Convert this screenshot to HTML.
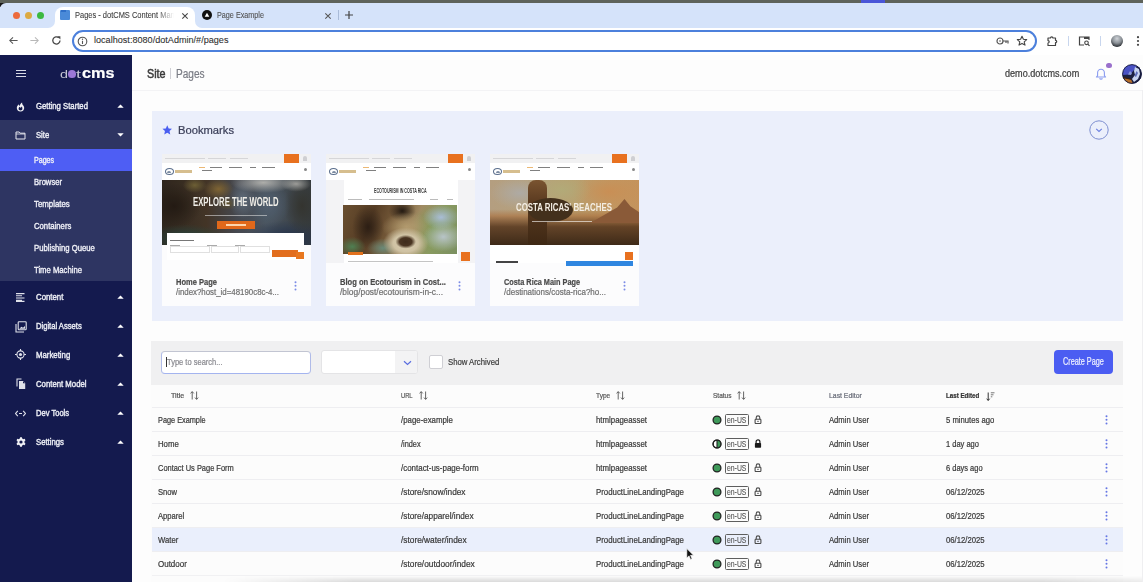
<!DOCTYPE html>
<html><head><meta charset="utf-8">
<style>
*{margin:0;padding:0;box-sizing:border-box}
html,body{width:1143px;height:582px;overflow:hidden;background:#fdfdfd;font-family:"Liberation Sans",sans-serif;position:relative}
.a{position:absolute}
.t{position:absolute;white-space:nowrap;line-height:1;-webkit-text-stroke:0.22px currentColor}
</style></head><body>
<div class="a" style="left:0px;top:0px;width:1143px;height:3px;background:#d5e3fa;"></div>
<div class="a" style="left:0px;top:3px;width:1143px;height:25px;background:#d5e3fa;"></div>
<div class="a" style="left:0px;top:0px;width:6px;height:7px;background:#1a1a1a;"></div>
<div class="a" style="left:0px;top:2.6px;width:8px;height:8px;background:#d5e3fa;border-radius:6px 0 0 0"></div>
<div class="a" style="left:0px;top:0px;width:1143px;height:2.7px;background:#5e635b;"></div>
<div class="a" style="left:860.7px;top:0px;width:24.5px;height:2.5px;background:#4a56d8;"></div>
<div class="a" style="left:0px;top:28px;width:1143px;height:27px;background:#fff;"></div>
<div class="a" style="left:55px;top:7px;width:140px;height:22px;background:#fff;border-radius:8px 8px 0 0"></div>
<div class="a" style="left:72px;top:30px;width:965px;height:22px;background:#fff;border:2px solid #4c80dc;border-radius:11px"></div>
<div class="a" style="left:12.5px;top:11.5px;width:7.5px;height:7.5px;background:#ec6a3c;border-radius:50%"></div>
<div class="a" style="left:24.5px;top:11.5px;width:7.5px;height:7.5px;background:#dcaa42;border-radius:50%"></div>
<div class="a" style="left:36.5px;top:11.5px;width:7.5px;height:7.5px;background:#3cb940;border-radius:50%"></div>
<div class="a" style="left:48px;top:21px;width:7px;height:7px;background:#fff;"></div>
<div class="a" style="left:48px;top:21px;width:7px;height:7px;background:#d5e3fa;border-radius:0 0 7px 0"></div>
<div class="a" style="left:195px;top:21px;width:7px;height:7px;background:#fff;"></div>
<div class="a" style="left:195px;top:21px;width:7px;height:7px;background:#d5e3fa;border-radius:0 0 0 7px"></div>
<div class="a" style="left:60px;top:10px;width:10px;height:10px;background:#4a8ad8;border-radius:1px"></div>
<div class="a" style="left:61px;top:10px;width:5px;height:2px;background:#2f6fc8;"></div>
<div class="a" style="left:74.5px;top:0;width:100px;height:28px;overflow:hidden;-webkit-mask-image:linear-gradient(90deg,#000 82%,transparent 99%)"><div class="t" style="left:0.0px;top:10.94px;font-size:9.3px;color:#404040;transform:scaleX(0.804);transform-origin:0 0;-webkit-text-stroke:0.1px currentColor;">Pages - dotCMS Content Manag</div>
</div>
<svg class="a" style="left:180.5px;top:11.5px" width="8" height="8" viewBox="0 0 8 8"><path d="M1.3 1.3L6.7 6.7M6.7 1.3L1.3 6.7" stroke="#444" stroke-width="1.05"/></svg>
<div class="a" style="left:202px;top:10px;width:10px;height:10px;background:#111;border-radius:50%"></div>
<svg class="a" style="left:202px;top:10px" width="10" height="10" viewBox="0 0 10 10"><path d="M5 2.8L7.3 6.8H2.7Z" fill="#fff"/></svg>
<div class="t" style="left:217.1px;top:10.94px;font-size:9.3px;color:#505050;transform:scaleX(0.777);transform-origin:0 0;-webkit-text-stroke:0.1px currentColor;">Page Example</div>
<svg class="a" style="left:323.5px;top:11.5px" width="8" height="8" viewBox="0 0 8 8"><path d="M1.3 1.3L6.7 6.7M6.7 1.3L1.3 6.7" stroke="#555" stroke-width="1.05"/></svg>
<div class="a" style="left:338px;top:10px;width:1px;height:10px;background:#a9bbd8;"></div>
<svg class="a" style="left:344px;top:10px" width="10" height="10" viewBox="0 0 10 10"><path d="M5 1V9M1 5H9" stroke="#444" stroke-width="1.2"/></svg>
<svg class="a" style="left:8px;top:35px" width="11" height="11" viewBox="0 0 11 11"><path d="M9.6 5.5H1.8M5 2.3L1.8 5.5L5 8.7" stroke="#555" stroke-width="1.05" fill="none"/></svg>
<svg class="a" style="left:29px;top:35px" width="11" height="11" viewBox="0 0 11 11"><path d="M1.4 5.5H9.2M6 2.3L9.2 5.5L6 8.7" stroke="#b8b8b8" stroke-width="1.05" fill="none"/></svg>
<svg class="a" style="left:51px;top:35px" width="11" height="11" viewBox="0 0 11 11"><path d="M9 5.5A3.6 3.6 0 1 1 7.8 2.8" stroke="#474747" stroke-width="1.3" fill="none"/><path d="M6.2 1.2H9.4V4.4Z" fill="#474747"/></svg>
<svg class="a" style="left:77px;top:35.5px" width="11" height="11" viewBox="0 0 11 11"><circle cx="5.5" cy="5.5" r="4.3" stroke="#555" stroke-width="1.1" fill="none"/><path d="M5.5 4.8V8" stroke="#555" stroke-width="1.1"/><circle cx="5.5" cy="3.2" r=".7" fill="#555"/></svg>
<div class="t" style="left:94px;top:36px;font-size:9.1px;color:#303030;-webkit-text-stroke:0.08px currentColor">localhost:8080/dotAdmin/#/pages</div>
<svg class="a" style="left:996px;top:36px" width="13" height="10" viewBox="0 0 13 10"><circle cx="4" cy="5" r="3" stroke="#555" stroke-width="1.2" fill="none"/><circle cx="4" cy="5" r=".8" fill="#555"/><path d="M7 5H12V7.5M10 5V7" stroke="#555" stroke-width="1.2" fill="none"/></svg>
<svg class="a" style="left:1016px;top:35px" width="12" height="12" viewBox="0 0 12 12"><path d="M6 1.2L7.4 4.3L10.7 4.6L8.2 6.8L9 10.1L6 8.4L3 10.1L3.8 6.8L1.3 4.6L4.6 4.3Z" stroke="#444" stroke-width="1.1" fill="none" stroke-linejoin="round"/></svg>
<svg class="a" style="left:1046px;top:35px" width="12" height="12" viewBox="0 0 12 12"><path d="M2 3H4.5A1.2 1.2 0 0 1 6.9 3H9.5V5.3A1.2 1.2 0 0 1 9.5 7.7V10.5H2V8A1.2 1.2 0 0 0 2 5.6Z" stroke="#444" stroke-width="1.2" fill="none" stroke-linejoin="round"/></svg>
<div class="a" style="left:1068px;top:36px;width:1px;height:10px;background:#c8d6ee;"></div>
<svg class="a" style="left:1078px;top:35px" width="13" height="12" viewBox="0 0 13 12"><path d="M6 10H1.5V2H11V5" stroke="#444" stroke-width="1.2" fill="none"/><path d="M6 2H11V4H6Z" fill="#444"/><circle cx="8.5" cy="7.8" r="1.8" stroke="#444" stroke-width="1.1" fill="none"/><path d="M9.8 9.1L11.5 10.8" stroke="#444" stroke-width="1.2"/></svg>
<div class="a" style="left:1100px;top:36px;width:1px;height:10px;background:#c8d6ee;"></div>
<div class="a" style="left:1110.5px;top:34.5px;width:12px;height:12px;background:radial-gradient(circle at 50% 30%,#cfd3d8 0,#8a9096 45%,#2a2e33 80%);border-radius:50%"></div>
<svg class="a" style="left:1135px;top:35px" width="6" height="12" viewBox="0 0 6 12"><circle cx="3" cy="2.2" r="1.1" fill="#444"/><circle cx="3" cy="6" r="1.1" fill="#444"/><circle cx="3" cy="9.8" r="1.1" fill="#444"/></svg>
<div class="a" style="left:0px;top:55px;width:132px;height:527px;background:#141a4e;"></div>
<div class="a" style="left:0px;top:120px;width:132px;height:161px;background:#2e3562;"></div>
<div class="a" style="left:0px;top:149px;width:132px;height:22px;background:#4e5ef4;"></div>
<div class="a" style="left:16px;top:69.5px;width:10px;height:1.3px;background:#d8dae6;"></div>
<div class="a" style="left:16px;top:72.7px;width:10px;height:1.3px;background:#d8dae6;"></div>
<div class="a" style="left:16px;top:75.8px;width:10px;height:1.3px;background:#d8dae6;"></div>
<div class="t" style="left:59.6px;top:69.03px;font-size:11.2px;color:#c4c5d2;transform:scaleX(1.284);transform-origin:0 0;-webkit-text-stroke:0;">d</div>
<div class="a" style="left:68.2px;top:70.3px;width:7.7px;height:7.7px;background:#9b78d6;border-radius:50%"></div>
<div class="t" style="left:76.0px;top:69.03px;font-size:11.2px;color:#c4c5d2;transform:scaleX(1.607);transform-origin:0 0;-webkit-text-stroke:0;">t</div>
<div class="t" style="left:81.6px;top:65.80px;font-size:14.6px;color:#ffffff;font-weight:bold;transform:scaleX(1.109);transform-origin:0 0;">cms</div>
<svg class="a" style="left:16px;top:101.5px" width="9" height="10" viewBox="0 0 9 10"><path d="M4.5 9.6C2.2 9.6 0.8 8 0.8 6.1C0.8 4.3 2.1 3.1 2.6 2.3C2.7 3.1 3.1 3.7 3.6 4C3.9 2.4 5 1 6.1 0.4C6 1.6 6.6 2.6 7.3 3.6C7.9 4.4 8.2 5.2 8.2 6.1C8.2 8 6.8 9.6 4.5 9.6Z" fill="#f2f2f6"/><path d="M4.5 8.4C3.4 8.4 2.6 7.7 2.6 6.7C2.6 5.8 3.3 5.2 3.8 4.8C4 5.4 4.4 5.7 4.9 5.8C5.1 5.2 5.5 4.8 5.9 4.6C6.2 5.2 6.4 5.9 6.4 6.7C6.4 7.7 5.6 8.4 4.5 8.4Z" fill="#141a4e"/></svg>
<svg class="a" style="left:15px;top:130.6px" width="11" height="9" viewBox="0 0 11 9"><path d="M1 1H4.2L5.2 2.2H10V8H1Z" stroke="#e8e9f0" stroke-width="1" fill="none" stroke-linejoin="round"/><path d="M1 3H10" stroke="#e8e9f0" stroke-width="0.8"/></svg>
<div class="t" style="left:35.5px;top:102.26px;font-size:8.7px;color:#eceef5;transform:scaleX(0.889);transform-origin:0 0;-webkit-text-stroke:0.4px currentColor;">Getting Started</div>
<div class="t" style="left:35.5px;top:131.26px;font-size:8.7px;color:#eceef5;transform:scaleX(0.881);transform-origin:0 0;-webkit-text-stroke:0.4px currentColor;">Site</div>
<svg class="a" style="left:116.5px;top:104px" width="7" height="4" viewBox="0 0 7 4"><path d="M0.3 3.8L3.5 0.4L6.7 3.8Z" fill="#fff"/></svg>
<svg class="a" style="left:116.5px;top:133.2px" width="7" height="4" viewBox="0 0 7 4"><path d="M0.3 0.2L3.5 3.6L6.7 0.2Z" fill="#fff"/></svg>
<div class="t" style="left:33.8px;top:156.16px;font-size:8.7px;color:#f0f1f8;transform:scaleX(0.815);transform-origin:0 0;-webkit-text-stroke:0.35px currentColor;">Pages</div>
<div class="t" style="left:33.8px;top:178.16px;font-size:8.7px;color:#f0f1f8;transform:scaleX(0.878);transform-origin:0 0;-webkit-text-stroke:0.35px currentColor;">Browser</div>
<div class="t" style="left:33.8px;top:200.16px;font-size:8.7px;color:#f0f1f8;transform:scaleX(0.903);transform-origin:0 0;-webkit-text-stroke:0.35px currentColor;">Templates</div>
<div class="t" style="left:33.8px;top:222.16px;font-size:8.7px;color:#f0f1f8;transform:scaleX(0.889);transform-origin:0 0;-webkit-text-stroke:0.35px currentColor;">Containers</div>
<div class="t" style="left:33.8px;top:244.16px;font-size:8.7px;color:#f0f1f8;transform:scaleX(0.888);transform-origin:0 0;-webkit-text-stroke:0.35px currentColor;">Publishing Queue</div>
<div class="t" style="left:33.8px;top:266.16px;font-size:8.7px;color:#f0f1f8;transform:scaleX(0.884);transform-origin:0 0;-webkit-text-stroke:0.35px currentColor;">Time Machine</div>
<div class="t" style="left:35.6px;top:293.36px;font-size:8.7px;color:#eceef5;transform:scaleX(0.899);transform-origin:0 0;-webkit-text-stroke:0.4px currentColor;">Content</div>
<svg class="a" style="left:116.5px;top:295.2px" width="7" height="4" viewBox="0 0 7 4"><path d="M0.3 3.8L3.5 0.4L6.7 3.8Z" fill="#fff"/></svg>
<div class="t" style="left:35.6px;top:322.26px;font-size:8.7px;color:#eceef5;transform:scaleX(0.877);transform-origin:0 0;-webkit-text-stroke:0.4px currentColor;">Digital Assets</div>
<svg class="a" style="left:116.5px;top:324.09999999999997px" width="7" height="4" viewBox="0 0 7 4"><path d="M0.3 3.8L3.5 0.4L6.7 3.8Z" fill="#fff"/></svg>
<div class="t" style="left:35.6px;top:351.16px;font-size:8.7px;color:#eceef5;transform:scaleX(0.898);transform-origin:0 0;-webkit-text-stroke:0.4px currentColor;">Marketing</div>
<svg class="a" style="left:116.5px;top:353.0px" width="7" height="4" viewBox="0 0 7 4"><path d="M0.3 3.8L3.5 0.4L6.7 3.8Z" fill="#fff"/></svg>
<div class="t" style="left:35.6px;top:380.06px;font-size:8.7px;color:#eceef5;transform:scaleX(0.894);transform-origin:0 0;-webkit-text-stroke:0.4px currentColor;">Content Model</div>
<svg class="a" style="left:116.5px;top:381.9px" width="7" height="4" viewBox="0 0 7 4"><path d="M0.3 3.8L3.5 0.4L6.7 3.8Z" fill="#fff"/></svg>
<div class="t" style="left:35.6px;top:408.96px;font-size:8.7px;color:#eceef5;transform:scaleX(0.870);transform-origin:0 0;-webkit-text-stroke:0.4px currentColor;">Dev Tools</div>
<svg class="a" style="left:116.5px;top:410.8px" width="7" height="4" viewBox="0 0 7 4"><path d="M0.3 3.8L3.5 0.4L6.7 3.8Z" fill="#fff"/></svg>
<div class="t" style="left:35.6px;top:437.86px;font-size:8.7px;color:#eceef5;transform:scaleX(0.888);transform-origin:0 0;-webkit-text-stroke:0.4px currentColor;">Settings</div>
<svg class="a" style="left:116.5px;top:439.7px" width="7" height="4" viewBox="0 0 7 4"><path d="M0.3 3.8L3.5 0.4L6.7 3.8Z" fill="#fff"/></svg>
<svg class="a" style="left:16px;top:293px" width="9" height="9" viewBox="0 0 9 9"><path d="M0 0.6H8.5M0 2.8H6M0 5H8.5M0 7.2H6M0 8.4H8.5" stroke="#dfe1ea" stroke-width="1.1"/></svg>
<svg class="a" style="left:14.5px;top:320.5px" width="12" height="12" viewBox="0 0 12 12"><rect x="3.2" y="0.8" width="8" height="8" stroke="#dfe1ea" stroke-width="1.1" fill="none" rx="0.8"/><path d="M1 3V11H9" stroke="#dfe1ea" stroke-width="1.1" fill="none"/><path d="M4.5 7.5L6.5 5.8L8 6.8L10 5V7.8H4.5Z" fill="#dfe1ea"/></svg>
<svg class="a" style="left:15px;top:349.3px" width="11" height="11" viewBox="0 0 11 11"><circle cx="5.5" cy="5.5" r="3.6" stroke="#dfe1ea" stroke-width="1.1" fill="none"/><circle cx="5.5" cy="5.5" r="1.6" fill="#dfe1ea"/><path d="M5.5 0V1.9M5.5 9.1V11M0 5.5H1.9M9.1 5.5H11" stroke="#dfe1ea" stroke-width="1.1"/></svg>
<svg class="a" style="left:15.5px;top:378px" width="10" height="12" viewBox="0 0 10 12"><path d="M1 8.5V1H5.5" stroke="#dfe1ea" stroke-width="1.1" fill="none"/><path d="M3 3H7.2L9.2 5V11H3Z" fill="#dfe1ea"/><path d="M7 3V5.2H9.2" fill="#141a4e"/></svg>
<svg class="a" style="left:15px;top:409.5px" width="11" height="7" viewBox="0 0 11 7"><path d="M2.8 0.8L0.6 3.5L2.8 6.2M8.2 0.8L10.4 3.5L8.2 6.2M4 3.5H7" stroke="#dfe1ea" stroke-width="1.1" fill="none"/></svg>
<svg class="a" style="left:15.5px;top:436.5px" width="10" height="10" viewBox="0 0 10 10"><path d="M4.1 0.3H5.9L6.2 1.6L7.3 2.2L8.6 1.8L9.5 3.3L8.5 4.3V5.7L9.5 6.7L8.6 8.2L7.3 7.8L6.2 8.4L5.9 9.7H4.1L3.8 8.4L2.7 7.8L1.4 8.2L0.5 6.7L1.5 5.7V4.3L0.5 3.3L1.4 1.8L2.7 2.2L3.8 1.6Z" fill="#f0f0f5"/><circle cx="5" cy="5" r="1.6" fill="#141a4e"/></svg>
<div class="t" style="left:146.7px;top:67.07px;font-size:13.1px;color:#3a3a3a;transform:scaleX(0.820);transform-origin:0 0;-webkit-text-stroke:0.55px #3a3a3a;">Site</div>
<div class="a" style="left:170.3px;top:68px;width:0.8px;height:11px;background:#cfcfd4;"></div>
<div class="t" style="left:175.6px;top:67.07px;font-size:13.1px;color:#7a7c85;transform:scaleX(0.770);transform-origin:0 0;">Pages</div>
<div class="t" style="left:1004.8px;top:68.80px;font-size:10.2px;color:#3c3c3c;transform:scaleX(0.892);transform-origin:0 0;">demo.dotcms.com</div>
<svg class="a" style="left:1095px;top:67.5px" width="12" height="12" viewBox="0 0 12 12"><path d="M6 1.2C3.9 1.2 2.6 2.8 2.6 4.8V7.6L1.4 9H10.6L9.4 7.6V4.8C9.4 2.8 8.1 1.2 6 1.2Z" stroke="#8a9cf0" stroke-width="1.1" fill="none" stroke-linejoin="round"/><path d="M4.6 10.2A1.5 1.5 0 0 0 7.4 10.2" stroke="#8a9cf0" stroke-width="1.1" fill="none"/></svg>
<div class="a" style="left:1106px;top:62.5px;width:5.6px;height:5.6px;background:#9a70cc;border-radius:50%"></div>
<svg class="a" style="left:1122.3px;top:63.6px" width="20" height="20" viewBox="0 0 20 20"><defs><clipPath id="av"><circle cx="10" cy="10" r="9.6"/></clipPath></defs><g clip-path="url(#av)"><rect width="20" height="20" fill="#4a52c4"/><path d="M0 11L8 10.5L12 6L15 2L20 3V20H0Z" fill="#1c2040"/><path d="M0 13L9 15.5L11 20H4L0 16Z" fill="#b8702a"/><path d="M0 12.5L9 14.8L10 16L0 14Z" fill="#3a2010"/><path d="M13 3L17 5L18 10L16 15L12 18L10 15L13 11L12 7Z" fill="#c8d4f0"/><path d="M14.5 7L16 9L14 13L12.5 12Z" fill="#5a6ab8"/><path d="M8 7L10 9L9 11L6 10.5Z" fill="#8a9ad8"/></g><circle cx="10" cy="10" r="9.4" fill="none" stroke="#15183a" stroke-width="0.9"/></svg>
<div class="a" style="left:132px;top:90px;width:1011px;height:1px;background:#f3f3f5;"></div>
<div class="a" style="left:151.5px;top:110.5px;width:971.5px;height:210px;background:#ebeffb;"></div>
<svg class="a" style="left:161.5px;top:124.8px" width="10.5" height="10" viewBox="0 0 24 23"><path d="M12 0.8L15.3 7.9L23 8.8L17.3 14L18.9 21.7L12 17.8L5.1 21.7L6.7 14L1 8.8L8.7 7.9Z" fill="#4a5ef0"/></svg>
<div class="t" style="left:177.9px;top:124.75px;font-size:11.0px;color:#3a3e58;transform:scaleX(1.018);transform-origin:0 0;">Bookmarks</div>
<svg class="a" style="left:1089px;top:119.5px" width="20" height="20" viewBox="0 0 20 20"><circle cx="10" cy="10" r="9.2" stroke="#7e8fd0" stroke-width="1" fill="none"/><path d="M7.2 8.8L10 11.4L12.8 8.8" stroke="#6a7fe0" stroke-width="1.1" fill="none"/></svg>
<div class="a" style="left:161.7px;top:154px;width:149px;height:152px;background:#fcfcfd;"></div>
<div class="a" style="left:161.7px;top:154px;width:149px;height:9px;background:#f1f1f2;"></div>
<div class="a" style="left:164.7px;top:157.5px;width:40px;height:1.2px;background:#d6d6d8;"></div>
<div class="a" style="left:207.7px;top:157.5px;width:18px;height:1.2px;background:#d6d6d8;"></div>
<div class="a" style="left:229.7px;top:157.5px;width:18px;height:1.2px;background:#d6d6d8;"></div>
<div class="a" style="left:283.7px;top:154px;width:15px;height:8.5px;background:#e8711f;"></div>
<div class="a" style="left:302.7px;top:156px;width:4px;height:5px;background:#cfcfd2;border-radius:2px 2px 0 0"></div>
<div class="a" style="left:161.7px;top:163px;width:149px;height:17px;background:#ffffff;"></div>
<div class="a" style="left:164.7px;top:167.5px;width:9px;height:7px;background:transparent;border:1.3px solid #5a6e8c;border-radius:50%"></div>
<div class="a" style="left:167.2px;top:170.5px;width:4px;height:2px;background:#7a8aa0;border-radius:2px 2px 0 0"></div>
<div class="a" style="left:174.7px;top:169.5px;width:17px;height:3px;background:#c8a868;opacity:.75"></div>
<div class="a" style="left:198.7px;top:166.5px;width:6px;height:1.4px;background:#e39a3a;opacity:.7"></div>
<div class="a" style="left:209.7px;top:166.5px;width:12px;height:1.4px;background:#4a4a4a;opacity:.7"></div>
<div class="a" style="left:228.7px;top:166.5px;width:13px;height:1.4px;background:#4a4a4a;opacity:.7"></div>
<div class="a" style="left:249.7px;top:166.5px;width:6px;height:1.4px;background:#4a4a4a;opacity:.7"></div>
<div class="a" style="left:261.7px;top:166.5px;width:13px;height:1.4px;background:#4a4a4a;opacity:.7"></div>
<div class="a" style="left:201.7px;top:170px;width:10px;height:1.3px;background:#4a4a4a;opacity:.7"></div>
<div class="a" style="left:303.7px;top:168px;width:3px;height:3px;background:#555;border-radius:50%;opacity:.7"></div>
<div class="a" style="left:161.7px;top:180px;width:149px;height:65px;background:radial-gradient(ellipse 22% 16% at 68% 4%,#c4c4c0 0,rgba(196,196,192,0) 100%),radial-gradient(ellipse 10% 12% at 90% 6%,#b0b0ac 0,rgba(176,176,172,0) 100%),radial-gradient(ellipse 9% 30% at 54% 30%,#6a7888 0,rgba(106,120,136,0) 100%),radial-gradient(ellipse 14% 35% at 72% 38%,#5a6a7c 0,rgba(90,106,124,0) 100%),radial-gradient(ellipse 12% 45% at 94% 40%,#3a3a34 0,rgba(58,58,52,0) 100%),radial-gradient(ellipse 28% 22% at 16% 90%,#2c5048 0,rgba(44,80,72,0) 100%),radial-gradient(ellipse 28% 28% at 84% 90%,#263654 0,rgba(38,54,84,0) 100%),radial-gradient(ellipse 10% 14% at 54% 96%,#9a9484 0,rgba(154,148,132,0) 100%),radial-gradient(ellipse 10% 16% at 38% 14%,#8e7038 0,rgba(142,112,56,0) 100%),radial-gradient(ellipse 8% 12% at 22% 8%,#7a6a3a 0,rgba(122,106,58,0) 100%),radial-gradient(ellipse 7% 10% at 44% 36%,#6a5a30 0,rgba(106,90,48,0) 100%),radial-gradient(ellipse 18% 35% at 8% 40%,#261c14 0,rgba(38,28,20,0) 100%),linear-gradient(90deg,#33291f 0%,#4a3a2a 30%,#4d5058 50%,#525e6a 70%,#3c4246 100%);"></div>
<div class="a" style="left:161.7px;top:180px;width:149px;height:65px;background:rgba(20,20,20,.12);"></div>
<div class="t" style="left:192.6px;top:197.05px;font-size:11.9px;color:#f0eee8;font-weight:bold;transform:scaleX(0.648);transform-origin:0 0;-webkit-text-stroke:0;">EXPLORE THE WORLD</div>
<div class="a" style="left:204.7px;top:215px;width:62px;height:1.4px;background:rgba(230,230,230,.55);"></div>
<div class="a" style="left:217.2px;top:220.8px;width:37.8px;height:8.4px;background:#e0681a;"></div>
<div class="a" style="left:225.7px;top:224.3px;width:20px;height:1.3px;background:rgba(255,225,190,.9);"></div>
<div class="a" style="left:166.7px;top:233.2px;width:137.5px;height:27px;background:#ffffff;"></div>
<div class="a" style="left:169.7px;top:239.5px;width:24px;height:1.4px;background:#555;opacity:.8"></div>
<div class="a" style="left:169.7px;top:244.5px;width:10px;height:0.8px;background:#aaa;"></div>
<div class="a" style="left:206.7px;top:244.5px;width:10px;height:0.8px;background:#aaa;"></div>
<div class="a" style="left:234.7px;top:244.5px;width:10px;height:0.8px;background:#aaa;"></div>
<div class="a" style="left:169.7px;top:246px;width:40px;height:7px;background:#fff;border:0.8px solid #e0e0e0"></div>
<div class="a" style="left:210.7px;top:246px;width:28px;height:7px;background:#fff;border:0.8px solid #e0e0e0"></div>
<div class="a" style="left:239.7px;top:246px;width:30px;height:7px;background:#fff;border:0.8px solid #e0e0e0"></div>
<div class="a" style="left:272.2px;top:249.7px;width:26.3px;height:7.7px;background:#e26e1e;"></div>
<div class="a" style="left:295.7px;top:252px;width:8.3px;height:7.4px;background:#e8771f;"></div>
<div class="t" style="left:175.7px;top:277.66px;font-size:9.0px;color:#4a4a4a;font-weight:bold;transform:scaleX(0.836);transform-origin:0 0;">Home Page</div>
<div class="t" style="left:175.7px;top:287.64px;font-size:9.0px;color:#707070;transform:scaleX(0.874);transform-origin:0 0;">/index?host_id=48190c8c-4...</div>
<svg class="a" style="left:294.0px;top:281px" width="3" height="10" viewBox="0 0 3 10"><circle cx="1.5" cy="1.2" r="1" fill="#7b8ce6"/><circle cx="1.5" cy="4.8" r="1" fill="#7b8ce6"/><circle cx="1.5" cy="8.4" r="1" fill="#7b8ce6"/></svg>
<div class="a" style="left:326px;top:154px;width:149px;height:152px;background:#fcfcfd;"></div>
<div class="a" style="left:326px;top:154px;width:149px;height:9px;background:#f1f1f2;"></div>
<div class="a" style="left:329px;top:157.5px;width:40px;height:1.2px;background:#d6d6d8;"></div>
<div class="a" style="left:372px;top:157.5px;width:18px;height:1.2px;background:#d6d6d8;"></div>
<div class="a" style="left:394px;top:157.5px;width:18px;height:1.2px;background:#d6d6d8;"></div>
<div class="a" style="left:448px;top:154px;width:15px;height:8.5px;background:#e8711f;"></div>
<div class="a" style="left:467px;top:156px;width:4px;height:5px;background:#cfcfd2;border-radius:2px 2px 0 0"></div>
<div class="a" style="left:326px;top:163px;width:149px;height:17px;background:#ffffff;"></div>
<div class="a" style="left:329px;top:167.5px;width:9px;height:7px;background:transparent;border:1.3px solid #5a6e8c;border-radius:50%"></div>
<div class="a" style="left:331.5px;top:170.5px;width:4px;height:2px;background:#7a8aa0;border-radius:2px 2px 0 0"></div>
<div class="a" style="left:339px;top:169.5px;width:17px;height:3px;background:#c8a868;opacity:.75"></div>
<div class="a" style="left:363px;top:166.5px;width:6px;height:1.4px;background:#e39a3a;opacity:.7"></div>
<div class="a" style="left:374px;top:166.5px;width:12px;height:1.4px;background:#4a4a4a;opacity:.7"></div>
<div class="a" style="left:393px;top:166.5px;width:13px;height:1.4px;background:#4a4a4a;opacity:.7"></div>
<div class="a" style="left:414px;top:166.5px;width:6px;height:1.4px;background:#4a4a4a;opacity:.7"></div>
<div class="a" style="left:426px;top:166.5px;width:13px;height:1.4px;background:#4a4a4a;opacity:.7"></div>
<div class="a" style="left:366px;top:170px;width:10px;height:1.3px;background:#4a4a4a;opacity:.7"></div>
<div class="a" style="left:468px;top:168px;width:3px;height:3px;background:#555;border-radius:50%;opacity:.7"></div>
<div class="a" style="left:326px;top:180px;width:149px;height:83px;background:#f3f3f5;"></div>
<div class="a" style="left:343.5px;top:180px;width:114.5px;height:83px;background:#ffffff;"></div>
<div class="t" style="left:373.7px;top:186.66px;font-size:7.3px;color:#3a3a3a;font-weight:bold;transform:scaleX(0.500);transform-origin:0 0;-webkit-text-stroke:0;">ECOTOURISM IN COSTA RICA</div>
<div class="a" style="left:348px;top:198.5px;width:14px;height:1px;background:#bbb;"></div>
<div class="a" style="left:369px;top:198.5px;width:45px;height:1px;background:#bbb;"></div>
<div class="a" style="left:430px;top:198.5px;width:8px;height:1px;background:#bbb;"></div>
<div class="a" style="left:447px;top:198.5px;width:6px;height:1px;background:#bbb;"></div>
<div class="a" style="left:343.3px;top:205px;width:114.2px;height:48.5px;background:radial-gradient(ellipse 9% 14% at 55% 75%,#3e2c1c 0,#4a3522 60%,rgba(74,53,34,0) 100%),radial-gradient(ellipse 20% 32% at 55% 78%,#dcd0b4 0,#cfc2a3 55%,rgba(207,194,163,0) 100%),radial-gradient(ellipse 22% 30% at 56% 45%,#b29a6e 0,rgba(178,154,110,0) 100%),radial-gradient(ellipse 12% 22% at 52% 12%,#241a12 0,rgba(36,26,18,0) 100%),radial-gradient(ellipse 16% 25% at 86% 25%,#a9bdd6 0,rgba(169,189,214,0) 100%),radial-gradient(ellipse 18% 30% at 88% 65%,#b8c4c8 0,rgba(184,196,200,0) 100%),radial-gradient(ellipse 22% 50% at 80% 50%,#7f9a58 0,rgba(127,154,88,0) 100%),radial-gradient(ellipse 12% 20% at 8% 85%,#4f7f52 0,rgba(79,127,82,0) 100%),radial-gradient(ellipse 14% 20% at 35% 88%,#6a8a78 0,rgba(106,138,120,0) 100%),radial-gradient(ellipse 14% 45% at 22% 45%,#2c1e14 0,rgba(44,30,20,0) 100%),linear-gradient(110deg,#6a4f30 0%,#553c24 25%,#7a5e3c 45%,#a08a62 60%,#8a9a60 78%,#7a8f60 100%);"></div>
<div class="a" style="left:348px;top:252px;width:15.2px;height:3.2px;background:#e2711d;"></div>
<div class="a" style="left:460.5px;top:252.4px;width:9px;height:8.2px;background:#e8711f;"></div>
<div class="a" style="left:348px;top:260.5px;width:85px;height:1px;background:#c4c4c4;"></div>
<div class="t" style="left:340.0px;top:277.66px;font-size:9.0px;color:#4a4a4a;font-weight:bold;transform:scaleX(0.840);transform-origin:0 0;">Blog on Ecotourism in Cost...</div>
<div class="t" style="left:340.0px;top:287.64px;font-size:9.0px;color:#707070;transform:scaleX(0.932);transform-origin:0 0;">/blog/post/ecotourism-in-c...</div>
<svg class="a" style="left:458.3px;top:281px" width="3" height="10" viewBox="0 0 3 10"><circle cx="1.5" cy="1.2" r="1" fill="#7b8ce6"/><circle cx="1.5" cy="4.8" r="1" fill="#7b8ce6"/><circle cx="1.5" cy="8.4" r="1" fill="#7b8ce6"/></svg>
<div class="a" style="left:490.2px;top:154px;width:149px;height:152px;background:#fcfcfd;"></div>
<div class="a" style="left:490.2px;top:154px;width:149px;height:9px;background:#f1f1f2;"></div>
<div class="a" style="left:493.2px;top:157.5px;width:40px;height:1.2px;background:#d6d6d8;"></div>
<div class="a" style="left:536.2px;top:157.5px;width:18px;height:1.2px;background:#d6d6d8;"></div>
<div class="a" style="left:558.2px;top:157.5px;width:18px;height:1.2px;background:#d6d6d8;"></div>
<div class="a" style="left:612.2px;top:154px;width:15px;height:8.5px;background:#e8711f;"></div>
<div class="a" style="left:631.2px;top:156px;width:4px;height:5px;background:#cfcfd2;border-radius:2px 2px 0 0"></div>
<div class="a" style="left:490.2px;top:163px;width:149px;height:17px;background:#ffffff;"></div>
<div class="a" style="left:493.2px;top:167.5px;width:9px;height:7px;background:transparent;border:1.3px solid #5a6e8c;border-radius:50%"></div>
<div class="a" style="left:495.7px;top:170.5px;width:4px;height:2px;background:#7a8aa0;border-radius:2px 2px 0 0"></div>
<div class="a" style="left:503.2px;top:169.5px;width:17px;height:3px;background:#c8a868;opacity:.75"></div>
<div class="a" style="left:527.2px;top:166.5px;width:6px;height:1.4px;background:#e39a3a;opacity:.7"></div>
<div class="a" style="left:538.2px;top:166.5px;width:12px;height:1.4px;background:#4a4a4a;opacity:.7"></div>
<div class="a" style="left:557.2px;top:166.5px;width:13px;height:1.4px;background:#4a4a4a;opacity:.7"></div>
<div class="a" style="left:578.2px;top:166.5px;width:6px;height:1.4px;background:#4a4a4a;opacity:.7"></div>
<div class="a" style="left:590.2px;top:166.5px;width:13px;height:1.4px;background:#4a4a4a;opacity:.7"></div>
<div class="a" style="left:530.2px;top:170px;width:10px;height:1.3px;background:#4a4a4a;opacity:.7"></div>
<div class="a" style="left:632.2px;top:168px;width:3px;height:3px;background:#555;border-radius:50%;opacity:.7"></div>
<div class="a" style="left:490.2px;top:180px;width:149px;height:64.5px;background:radial-gradient(ellipse 20% 25% at 20% 20%,#aeaaa4 0,rgba(174,170,164,0) 100%),radial-gradient(ellipse 20% 25% at 48% 15%,#b2aa78 0,rgba(178,170,120,0) 100%),radial-gradient(ellipse 25% 30% at 80% 18%,#c98f55 0,rgba(201,143,85,0) 100%),linear-gradient(180deg,rgba(0,0,0,0) 0%,rgba(0,0,0,0) 45%,rgba(170,110,60,.6) 55%,rgba(90,58,32,.9) 72%,#3e2a18 100%),linear-gradient(90deg,#b49e80 0%,#b6a27c 35%,#b8a070 55%,#c4935c 100%);"></div>
<div class="a" style="left:590.2px;top:199px;width:49px;height:24px;background:#8a5a38;clip-path:polygon(0 100%,55% 35%,70% 0,82% 30%,100% 55%,100% 100%)"></div>
<div class="a" style="left:528.2px;top:180px;width:19px;height:64.5px;background:linear-gradient(180deg,#7a5430 0%,#5a3a20 35%,#3e2814 100%);border-radius:8px 8px 1px 1px"></div>
<div class="a" style="left:528.2px;top:198px;width:45px;height:24px;background:#43301c;border-radius:50%/50%;clip-path:polygon(0 0,100% 0,100% 100%,0 100%)"></div>
<div class="t" style="left:516.2px;top:201.24px;font-size:11.6px;color:#f4eee4;font-weight:bold;transform:scaleX(0.679);transform-origin:0 0;-webkit-text-stroke:0;">COSTA RICAS' BEACHES</div>
<div class="a" style="left:532.2px;top:221px;width:60px;height:1.3px;background:rgba(255,255,255,.6);"></div>
<div class="a" style="left:490.2px;top:244.5px;width:149px;height:18.5px;background:#ffffff;"></div>
<div class="a" style="left:496.2px;top:261.3px;width:22px;height:1.6px;background:#444;"></div>
<div class="a" style="left:565.6px;top:260.5px;width:67.4px;height:5.5px;background:#2f86e0;"></div>
<div class="a" style="left:625.2px;top:252.4px;width:8px;height:8.1px;background:#e8711f;"></div>
<div class="t" style="left:504.2px;top:277.66px;font-size:9.0px;color:#4a4a4a;font-weight:bold;transform:scaleX(0.813);transform-origin:0 0;">Costa Rica Main Page</div>
<div class="t" style="left:504.2px;top:287.64px;font-size:9.0px;color:#707070;transform:scaleX(0.890);transform-origin:0 0;">/destinations/costa-rica?ho...</div>
<svg class="a" style="left:622.5px;top:281px" width="3" height="10" viewBox="0 0 3 10"><circle cx="1.5" cy="1.2" r="1" fill="#7b8ce6"/><circle cx="1.5" cy="4.8" r="1" fill="#7b8ce6"/><circle cx="1.5" cy="8.4" r="1" fill="#7b8ce6"/></svg>
<div class="a" style="left:151.3px;top:340.5px;width:972px;height:44px;background:#f0f0f1;"></div>
<div class="a" style="left:160.8px;top:350.5px;width:150px;height:23.3px;background:#ffffff;border:1px solid;border-color:#c2c5d2 #b0bbe8 #a4b4ef #b0bbe8;border-radius:4px"></div>
<div class="a" style="left:166.3px;top:357px;width:0.8px;height:10px;background:#333;"></div>
<div class="t" style="left:167.2px;top:358.34px;font-size:9.0px;color:#8a8a90;transform:scaleX(0.834);transform-origin:0 0;">Type to search...</div>
<div class="a" style="left:320.8px;top:350.4px;width:97.6px;height:23.2px;background:#ffffff;border:1px solid #e4e4e6;border-radius:3px"></div>
<div class="a" style="left:395.3px;top:351.4px;width:22.1px;height:21.2px;background:#f3f3f4;border-radius:0 2px 2px 0"></div>
<svg class="a" style="left:402.5px;top:359.5px" width="9" height="6" viewBox="0 0 9 6"><path d="M1 1.2L4.5 4.5L8 1.2" stroke="#5a6ee0" stroke-width="1.2" fill="none"/></svg>
<div class="a" style="left:429px;top:355.2px;width:13.8px;height:13.6px;background:#ffffff;border:1px solid #cfcfd4;border-radius:2px"></div>
<div class="t" style="left:447.8px;top:357.13px;font-size:9.4px;color:#3c3c3c;transform:scaleX(0.827);transform-origin:0 0;">Show Archived</div>
<div class="a" style="left:1053.8px;top:350.4px;width:59.5px;height:23.3px;background:#4b5df2;border-radius:4px"></div>
<div class="t" style="left:1063.4px;top:356.82px;font-size:10.0px;color:#eef0ff;transform:scaleX(0.727);transform-origin:0 0;">Create Page</div>
<div class="a" style="left:151.3px;top:384.5px;width:972px;height:197.5px;background:#fcfcfc;"></div>
<div class="a" style="left:152px;top:528.3px;width:971px;height:23.6px;background:#eaeffc;"></div>
<div class="a" style="left:152px;top:407.2px;width:971px;height:0.9px;background:#eeeef1;"></div>
<div class="a" style="left:152px;top:431.2px;width:971px;height:0.9px;background:#eeeef1;"></div>
<div class="a" style="left:152px;top:455.2px;width:971px;height:0.9px;background:#eeeef1;"></div>
<div class="a" style="left:152px;top:479.2px;width:971px;height:0.9px;background:#eeeef1;"></div>
<div class="a" style="left:152px;top:503.2px;width:971px;height:0.9px;background:#eeeef1;"></div>
<div class="a" style="left:152px;top:527.2px;width:971px;height:0.9px;background:#eeeef1;"></div>
<div class="a" style="left:152px;top:551.2px;width:971px;height:0.9px;background:#eeeef1;"></div>
<div class="a" style="left:152px;top:575.2px;width:971px;height:0.9px;background:#f1f1f3;"></div>
<div class="t" style="left:170.6px;top:392.04px;font-size:7.0px;color:#555;transform:scaleX(1.018);transform-origin:0 0;">Title</div>
<svg class="a" style="left:189.8px;top:391.3px" width="9" height="9" viewBox="0 0 9 9"><path d="M2.2 8.5V0.8M0.6 2.4L2.2 0.6L3.8 2.4M6.6 0.5V8.2M5 6.6L6.6 8.4L8.2 6.6" stroke="#555" stroke-width="0.9" fill="none"/></svg>
<div class="t" style="left:401.4px;top:392.04px;font-size:7.0px;color:#5a5a5a;transform:scaleX(0.828);transform-origin:0 0;">URL</div>
<svg class="a" style="left:419.3px;top:391.3px" width="9" height="9" viewBox="0 0 9 9"><path d="M2.2 8.5V0.8M0.6 2.4L2.2 0.6L3.8 2.4M6.6 0.5V8.2M5 6.6L6.6 8.4L8.2 6.6" stroke="#555" stroke-width="0.9" fill="none"/></svg>
<div class="t" style="left:595.9px;top:392.04px;font-size:7.0px;color:#5a5a5a;transform:scaleX(0.936);transform-origin:0 0;">Type</div>
<svg class="a" style="left:616.2px;top:391.3px" width="9" height="9" viewBox="0 0 9 9"><path d="M2.2 8.5V0.8M0.6 2.4L2.2 0.6L3.8 2.4M6.6 0.5V8.2M5 6.6L6.6 8.4L8.2 6.6" stroke="#555" stroke-width="0.9" fill="none"/></svg>
<div class="t" style="left:712.5px;top:392.04px;font-size:7.0px;color:#5a5a5a;transform:scaleX(0.932);transform-origin:0 0;">Status</div>
<svg class="a" style="left:737.3px;top:391.3px" width="9" height="9" viewBox="0 0 9 9"><path d="M2.2 8.5V0.8M0.6 2.4L2.2 0.6L3.8 2.4M6.6 0.5V8.2M5 6.6L6.6 8.4L8.2 6.6" stroke="#555" stroke-width="0.9" fill="none"/></svg>
<div class="t" style="left:829.0px;top:392.04px;font-size:7.0px;color:#6a6e7a;transform:scaleX(0.980);transform-origin:0 0;">Last Editor</div>
<div class="t" style="left:945.7px;top:391.88px;font-size:7.0px;color:#333;font-weight:bold;transform:scaleX(0.883);transform-origin:0 0;">Last Edited</div>
<svg class="a" style="left:985.5px;top:391.5px" width="9" height="9" viewBox="0 0 9 9"><path d="M2.2 0.5V8.3M0.7 6.7L2.2 8.5L3.7 6.7" stroke="#333" stroke-width="1" fill="none"/><path d="M4.8 0.8H8.5M4.8 2.8H7.5M4.8 4.8H6.3" stroke="#666" stroke-width="0.9"/></svg>
<div class="t" style="left:158.4px;top:416.16px;font-size:8.7px;color:#3a3a3a;transform:scaleX(0.843);transform-origin:0 0;">Page Example</div>
<div class="t" style="left:401.4px;top:416.16px;font-size:8.7px;color:#3a3a3a;transform:scaleX(0.904);transform-origin:0 0;">/page-example</div>
<div class="t" style="left:595.8px;top:416.16px;font-size:8.7px;color:#3a3a3a;transform:scaleX(0.901);transform-origin:0 0;">htmlpageasset</div>
<svg class="a" style="left:711.8px;top:415.2px" width="10" height="10" viewBox="0 0 10 10"><circle cx="5" cy="5" r="3.9" fill="#3f9a5a" stroke="#222" stroke-width="1.3"/></svg>
<div class="a" style="left:725.2px;top:414px;width:23.4px;height:11.6px;background:transparent;border:1px solid #5e5e5e;border-radius:1.5px"></div>
<div class="t" style="left:727.2px;top:416.48px;font-size:8.6px;color:#555;transform:scaleX(0.796);transform-origin:0 0;-webkit-text-stroke:0.1px currentColor;">en-US</div>
<svg class="a" style="left:754.2px;top:414.8px" width="8" height="9" viewBox="0 0 8 9"><path d="M2.2 4.2V2.7A1.8 1.8 0 0 1 5.8 2.7V4.2" stroke="#4a4a4a" stroke-width="1.1" fill="none"/><rect x="1.1" y="4.3" width="5.8" height="4.2" rx="0.7" stroke="#4a4a4a" stroke-width="1.1" fill="none"/><rect x="3.4" y="5.8" width="1.2" height="1.2" fill="#4a4a4a"/></svg>
<div class="t" style="left:829.0px;top:416.16px;font-size:8.7px;color:#3a3a3a;transform:scaleX(0.880);transform-origin:0 0;">Admin User</div>
<div class="t" style="left:945.7px;top:416.16px;font-size:8.7px;color:#3a3a3a;transform:scaleX(0.886);transform-origin:0 0;">5 minutes ago</div>
<svg class="a" style="left:1104.7px;top:415.2px" width="3" height="10" viewBox="0 0 3 10"><circle cx="1.5" cy="1.2" r="1" fill="#6677e4"/><circle cx="1.5" cy="4.8" r="1" fill="#6677e4"/><circle cx="1.5" cy="8.4" r="1" fill="#6677e4"/></svg>
<div class="t" style="left:158.4px;top:440.16px;font-size:8.7px;color:#3a3a3a;transform:scaleX(0.896);transform-origin:0 0;">Home</div>
<div class="t" style="left:401.4px;top:440.16px;font-size:8.7px;color:#3a3a3a;transform:scaleX(0.845);transform-origin:0 0;">/index</div>
<div class="t" style="left:595.8px;top:440.16px;font-size:8.7px;color:#3a3a3a;transform:scaleX(0.901);transform-origin:0 0;">htmlpageasset</div>
<svg class="a" style="left:711.8px;top:439.2px" width="10" height="10" viewBox="0 0 10 10"><circle cx="5" cy="5" r="3.9" fill="#fff" stroke="#222" stroke-width="1.3"/><path d="M5 1.1A3.9 3.9 0 0 1 5 8.9Z" fill="#3f9a5a"/><path d="M5 1.1V8.9" stroke="#222" stroke-width="1.1"/><circle cx="5" cy="5" r="3.9" fill="none" stroke="#222" stroke-width="1.3"/></svg>
<div class="a" style="left:725.2px;top:438px;width:23.4px;height:11.6px;background:transparent;border:1px solid #5e5e5e;border-radius:1.5px"></div>
<div class="t" style="left:727.2px;top:440.48px;font-size:8.6px;color:#555;transform:scaleX(0.796);transform-origin:0 0;-webkit-text-stroke:0.1px currentColor;">en-US</div>
<svg class="a" style="left:754.2px;top:438.8px" width="8" height="9" viewBox="0 0 8 9"><path d="M2.1 4.2V2.7A1.9 1.9 0 0 1 5.9 2.7V4.2" stroke="#1a1a1a" stroke-width="1.2" fill="none"/><rect x="0.9" y="4" width="6.2" height="4.8" rx="0.7" fill="#1a1a1a"/></svg>
<div class="t" style="left:829.0px;top:440.16px;font-size:8.7px;color:#3a3a3a;transform:scaleX(0.880);transform-origin:0 0;">Admin User</div>
<div class="t" style="left:945.7px;top:440.16px;font-size:8.7px;color:#3a3a3a;transform:scaleX(0.864);transform-origin:0 0;">1 day ago</div>
<svg class="a" style="left:1104.7px;top:439.2px" width="3" height="10" viewBox="0 0 3 10"><circle cx="1.5" cy="1.2" r="1" fill="#6677e4"/><circle cx="1.5" cy="4.8" r="1" fill="#6677e4"/><circle cx="1.5" cy="8.4" r="1" fill="#6677e4"/></svg>
<div class="t" style="left:158.4px;top:464.16px;font-size:8.7px;color:#3a3a3a;transform:scaleX(0.857);transform-origin:0 0;">Contact Us Page Form</div>
<div class="t" style="left:401.4px;top:464.16px;font-size:8.7px;color:#3a3a3a;transform:scaleX(0.914);transform-origin:0 0;">/contact-us-page-form</div>
<div class="t" style="left:595.8px;top:464.16px;font-size:8.7px;color:#3a3a3a;transform:scaleX(0.901);transform-origin:0 0;">htmlpageasset</div>
<svg class="a" style="left:711.8px;top:463.2px" width="10" height="10" viewBox="0 0 10 10"><circle cx="5" cy="5" r="3.9" fill="#3f9a5a" stroke="#222" stroke-width="1.3"/></svg>
<div class="a" style="left:725.2px;top:462px;width:23.4px;height:11.6px;background:transparent;border:1px solid #5e5e5e;border-radius:1.5px"></div>
<div class="t" style="left:727.2px;top:464.48px;font-size:8.6px;color:#555;transform:scaleX(0.796);transform-origin:0 0;-webkit-text-stroke:0.1px currentColor;">en-US</div>
<svg class="a" style="left:754.2px;top:462.8px" width="8" height="9" viewBox="0 0 8 9"><path d="M2.2 4.2V2.7A1.8 1.8 0 0 1 5.8 2.7V4.2" stroke="#4a4a4a" stroke-width="1.1" fill="none"/><rect x="1.1" y="4.3" width="5.8" height="4.2" rx="0.7" stroke="#4a4a4a" stroke-width="1.1" fill="none"/><rect x="3.4" y="5.8" width="1.2" height="1.2" fill="#4a4a4a"/></svg>
<div class="t" style="left:829.0px;top:464.16px;font-size:8.7px;color:#3a3a3a;transform:scaleX(0.880);transform-origin:0 0;">Admin User</div>
<div class="t" style="left:945.7px;top:464.16px;font-size:8.7px;color:#3a3a3a;transform:scaleX(0.860);transform-origin:0 0;">6 days ago</div>
<svg class="a" style="left:1104.7px;top:463.2px" width="3" height="10" viewBox="0 0 3 10"><circle cx="1.5" cy="1.2" r="1" fill="#6677e4"/><circle cx="1.5" cy="4.8" r="1" fill="#6677e4"/><circle cx="1.5" cy="8.4" r="1" fill="#6677e4"/></svg>
<div class="t" style="left:158.4px;top:488.16px;font-size:8.7px;color:#3a3a3a;transform:scaleX(0.873);transform-origin:0 0;">Snow</div>
<div class="t" style="left:401.4px;top:488.16px;font-size:8.7px;color:#3a3a3a;transform:scaleX(0.954);transform-origin:0 0;">/store/snow/index</div>
<div class="t" style="left:595.8px;top:488.16px;font-size:8.7px;color:#3a3a3a;transform:scaleX(0.901);transform-origin:0 0;">ProductLineLandingPage</div>
<svg class="a" style="left:711.8px;top:487.2px" width="10" height="10" viewBox="0 0 10 10"><circle cx="5" cy="5" r="3.9" fill="#3f9a5a" stroke="#222" stroke-width="1.3"/></svg>
<div class="a" style="left:725.2px;top:486px;width:23.4px;height:11.6px;background:transparent;border:1px solid #5e5e5e;border-radius:1.5px"></div>
<div class="t" style="left:727.2px;top:488.48px;font-size:8.6px;color:#555;transform:scaleX(0.796);transform-origin:0 0;-webkit-text-stroke:0.1px currentColor;">en-US</div>
<svg class="a" style="left:754.2px;top:486.8px" width="8" height="9" viewBox="0 0 8 9"><path d="M2.2 4.2V2.7A1.8 1.8 0 0 1 5.8 2.7V4.2" stroke="#4a4a4a" stroke-width="1.1" fill="none"/><rect x="1.1" y="4.3" width="5.8" height="4.2" rx="0.7" stroke="#4a4a4a" stroke-width="1.1" fill="none"/><rect x="3.4" y="5.8" width="1.2" height="1.2" fill="#4a4a4a"/></svg>
<div class="t" style="left:829.0px;top:488.16px;font-size:8.7px;color:#3a3a3a;transform:scaleX(0.880);transform-origin:0 0;">Admin User</div>
<div class="t" style="left:945.7px;top:488.16px;font-size:8.7px;color:#3a3a3a;transform:scaleX(0.889);transform-origin:0 0;">06/12/2025</div>
<svg class="a" style="left:1104.7px;top:487.2px" width="3" height="10" viewBox="0 0 3 10"><circle cx="1.5" cy="1.2" r="1" fill="#6677e4"/><circle cx="1.5" cy="4.8" r="1" fill="#6677e4"/><circle cx="1.5" cy="8.4" r="1" fill="#6677e4"/></svg>
<div class="t" style="left:158.4px;top:512.16px;font-size:8.7px;color:#3a3a3a;transform:scaleX(0.877);transform-origin:0 0;">Apparel</div>
<div class="t" style="left:401.4px;top:512.16px;font-size:8.7px;color:#3a3a3a;transform:scaleX(0.951);transform-origin:0 0;">/store/apparel/index</div>
<div class="t" style="left:595.8px;top:512.16px;font-size:8.7px;color:#3a3a3a;transform:scaleX(0.901);transform-origin:0 0;">ProductLineLandingPage</div>
<svg class="a" style="left:711.8px;top:511.2px" width="10" height="10" viewBox="0 0 10 10"><circle cx="5" cy="5" r="3.9" fill="#3f9a5a" stroke="#222" stroke-width="1.3"/></svg>
<div class="a" style="left:725.2px;top:510px;width:23.4px;height:11.6px;background:transparent;border:1px solid #5e5e5e;border-radius:1.5px"></div>
<div class="t" style="left:727.2px;top:512.48px;font-size:8.6px;color:#555;transform:scaleX(0.796);transform-origin:0 0;-webkit-text-stroke:0.1px currentColor;">en-US</div>
<svg class="a" style="left:754.2px;top:510.8px" width="8" height="9" viewBox="0 0 8 9"><path d="M2.2 4.2V2.7A1.8 1.8 0 0 1 5.8 2.7V4.2" stroke="#4a4a4a" stroke-width="1.1" fill="none"/><rect x="1.1" y="4.3" width="5.8" height="4.2" rx="0.7" stroke="#4a4a4a" stroke-width="1.1" fill="none"/><rect x="3.4" y="5.8" width="1.2" height="1.2" fill="#4a4a4a"/></svg>
<div class="t" style="left:829.0px;top:512.16px;font-size:8.7px;color:#3a3a3a;transform:scaleX(0.880);transform-origin:0 0;">Admin User</div>
<div class="t" style="left:945.7px;top:512.16px;font-size:8.7px;color:#3a3a3a;transform:scaleX(0.889);transform-origin:0 0;">06/12/2025</div>
<svg class="a" style="left:1104.7px;top:511.2px" width="3" height="10" viewBox="0 0 3 10"><circle cx="1.5" cy="1.2" r="1" fill="#6677e4"/><circle cx="1.5" cy="4.8" r="1" fill="#6677e4"/><circle cx="1.5" cy="8.4" r="1" fill="#6677e4"/></svg>
<div class="t" style="left:158.4px;top:536.16px;font-size:8.7px;color:#3a3a3a;transform:scaleX(0.887);transform-origin:0 0;">Water</div>
<div class="t" style="left:401.4px;top:536.16px;font-size:8.7px;color:#3a3a3a;transform:scaleX(0.957);transform-origin:0 0;">/store/water/index</div>
<div class="t" style="left:595.8px;top:536.16px;font-size:8.7px;color:#3a3a3a;transform:scaleX(0.901);transform-origin:0 0;">ProductLineLandingPage</div>
<svg class="a" style="left:711.8px;top:535.2px" width="10" height="10" viewBox="0 0 10 10"><circle cx="5" cy="5" r="3.9" fill="#3f9a5a" stroke="#222" stroke-width="1.3"/></svg>
<div class="a" style="left:725.2px;top:534px;width:23.4px;height:11.6px;background:transparent;border:1px solid #5e5e5e;border-radius:1.5px"></div>
<div class="t" style="left:727.2px;top:536.48px;font-size:8.6px;color:#555;transform:scaleX(0.796);transform-origin:0 0;-webkit-text-stroke:0.1px currentColor;">en-US</div>
<svg class="a" style="left:754.2px;top:534.8px" width="8" height="9" viewBox="0 0 8 9"><path d="M2.2 4.2V2.7A1.8 1.8 0 0 1 5.8 2.7V4.2" stroke="#4a4a4a" stroke-width="1.1" fill="none"/><rect x="1.1" y="4.3" width="5.8" height="4.2" rx="0.7" stroke="#4a4a4a" stroke-width="1.1" fill="none"/><rect x="3.4" y="5.8" width="1.2" height="1.2" fill="#4a4a4a"/></svg>
<div class="t" style="left:829.0px;top:536.16px;font-size:8.7px;color:#3a3a3a;transform:scaleX(0.880);transform-origin:0 0;">Admin User</div>
<div class="t" style="left:945.7px;top:536.16px;font-size:8.7px;color:#3a3a3a;transform:scaleX(0.889);transform-origin:0 0;">06/12/2025</div>
<svg class="a" style="left:1104.7px;top:535.2px" width="3" height="10" viewBox="0 0 3 10"><circle cx="1.5" cy="1.2" r="1" fill="#6677e4"/><circle cx="1.5" cy="4.8" r="1" fill="#6677e4"/><circle cx="1.5" cy="8.4" r="1" fill="#6677e4"/></svg>
<div class="t" style="left:158.4px;top:560.16px;font-size:8.7px;color:#3a3a3a;transform:scaleX(0.919);transform-origin:0 0;">Outdoor</div>
<div class="t" style="left:401.4px;top:560.16px;font-size:8.7px;color:#3a3a3a;transform:scaleX(0.960);transform-origin:0 0;">/store/outdoor/index</div>
<div class="t" style="left:595.8px;top:560.16px;font-size:8.7px;color:#3a3a3a;transform:scaleX(0.901);transform-origin:0 0;">ProductLineLandingPage</div>
<svg class="a" style="left:711.8px;top:559.2px" width="10" height="10" viewBox="0 0 10 10"><circle cx="5" cy="5" r="3.9" fill="#3f9a5a" stroke="#222" stroke-width="1.3"/></svg>
<div class="a" style="left:725.2px;top:558px;width:23.4px;height:11.6px;background:transparent;border:1px solid #5e5e5e;border-radius:1.5px"></div>
<div class="t" style="left:727.2px;top:560.48px;font-size:8.6px;color:#555;transform:scaleX(0.796);transform-origin:0 0;-webkit-text-stroke:0.1px currentColor;">en-US</div>
<svg class="a" style="left:754.2px;top:558.8px" width="8" height="9" viewBox="0 0 8 9"><path d="M2.2 4.2V2.7A1.8 1.8 0 0 1 5.8 2.7V4.2" stroke="#4a4a4a" stroke-width="1.1" fill="none"/><rect x="1.1" y="4.3" width="5.8" height="4.2" rx="0.7" stroke="#4a4a4a" stroke-width="1.1" fill="none"/><rect x="3.4" y="5.8" width="1.2" height="1.2" fill="#4a4a4a"/></svg>
<div class="t" style="left:829.0px;top:560.16px;font-size:8.7px;color:#3a3a3a;transform:scaleX(0.880);transform-origin:0 0;">Admin User</div>
<div class="t" style="left:945.7px;top:560.16px;font-size:8.7px;color:#3a3a3a;transform:scaleX(0.889);transform-origin:0 0;">06/12/2025</div>
<svg class="a" style="left:1104.7px;top:559.2px" width="3" height="10" viewBox="0 0 3 10"><circle cx="1.5" cy="1.2" r="1" fill="#6677e4"/><circle cx="1.5" cy="4.8" r="1" fill="#6677e4"/><circle cx="1.5" cy="8.4" r="1" fill="#6677e4"/></svg>
<svg class="a" style="left:685.5px;top:547.5px" width="8" height="12" viewBox="0 0 8 12"><path d="M0.8 0.6V10L3 7.8L4.6 11.4L6 10.8L4.5 7.3H7.5Z" fill="#111" stroke="#fff" stroke-width="0.6"/></svg>
<div class="a" style="left:132px;top:576px;width:1011px;height:6px;background:linear-gradient(180deg,rgba(0,0,0,0),rgba(0,0,0,.07) 50%,rgba(0,0,0,.13));-webkit-mask-image:linear-gradient(90deg,transparent 0%,transparent 9%,#000 22%,#000 90%,rgba(0,0,0,.5) 100%)"></div>
<div class="a" style="left:1141.5px;top:90px;width:1.5px;height:492px;background:#efeff1;"></div>
</body></html>
